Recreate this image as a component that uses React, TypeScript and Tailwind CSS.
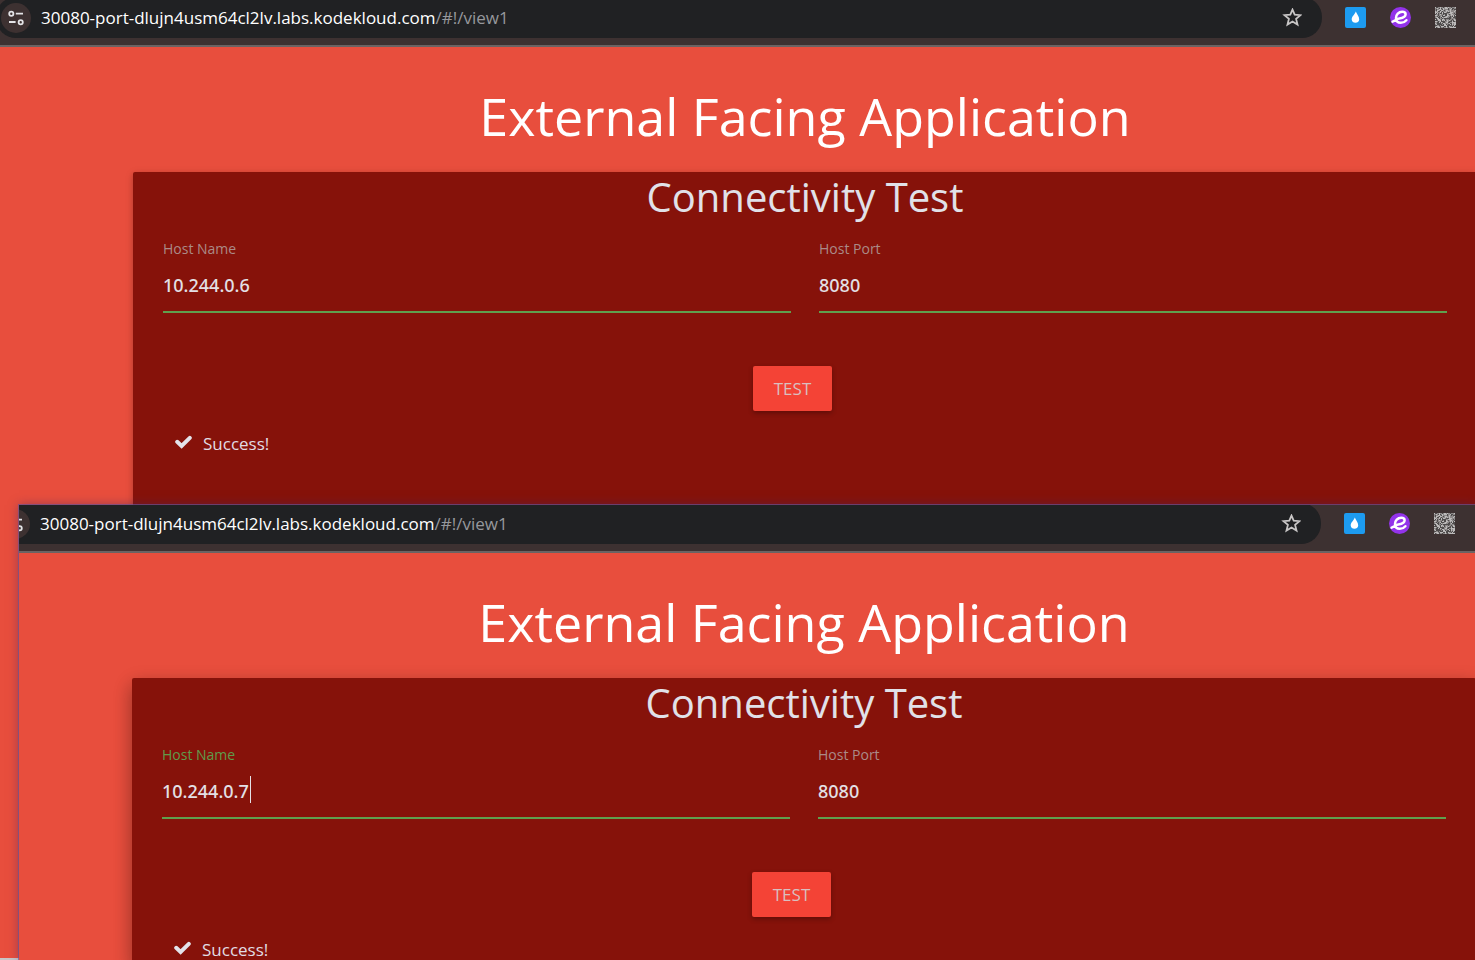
import { useId, useState } from "react";

const qrCells = Array.from({ length: 441 }, (_, i) => {
  let n = Math.imul(i + 17, 374761393) ^ 668265263;
  n = Math.imul(n ^ (n >>> 13), 1274126177);
  n = Math.imul(n ^ (n >>> 15), 2246822519);
  return ((n ^ (n >>> 16)) >>> 0) / 4294967296;
});

function TuneIcon() {
  return (
    <svg className="size-4" viewBox="0 0 16 16" fill="none" stroke="#e3e3e6" strokeWidth="1.8" aria-hidden="true">
      <circle cx="3.3" cy="3.7" r="2.1" />
      <path d="M7.8 3.7H15M1 12H7.6" />
      <circle cx="12.7" cy="12.2" r="2.1" />
    </svg>
  );
}

function StarIcon() {
  return (
    <svg className="size-5" viewBox="0 0 20 20" fill="none" stroke="#c8c6c6" strokeWidth="1.8" aria-hidden="true">
      <path d="M10.5 1.6 12.7 6.7 18.5 7.2 14.1 10.9 15.5 16.6 10.5 13.5 5.5 16.6 6.9 10.9 2.5 7.2 8.3 6.7Z" />
    </svg>
  );
}

function DropIcon() {
  return (
    <svg className="size-[21px]" viewBox="0 0 21 21" aria-hidden="true">
      <rect width="21" height="21" rx="2" fill="#1d9bf0" />
      <path d="M10.8 4.6C12 7.6 14.2 9.3 14.2 12.5A3.8 3.8 0 0 1 6.7 12.5C6.7 9.3 9.9 7.6 10.8 4.6Z" fill="#fff" />
    </svg>
  );
}

function ScriptEIcon() {
  return (
    <svg className="size-[21px]" viewBox="0 0 21 21" fill="none" aria-hidden="true">
      <circle cx="10.5" cy="10.5" r="10.5" fill="#9333ea" />
      <path
        d="M2.6 14.6C5.5 13.6 7 12 9.4 11.4 13 10.8 15.6 9.6 15.6 7.2 15.6 5.6 14 4.8 12.2 4.8 8.6 4.8 6 7.8 6 11 6 14.2 8.2 15.8 10.8 15.8 13.2 15.8 15 14.8 16.4 13.2"
        stroke="#fff"
        strokeWidth="2.5"
        strokeLinecap="round"
        strokeLinejoin="round"
      />
    </svg>
  );
}

function NoiseIcon() {
  return (
    <svg className="size-[21px]" viewBox="0 0 21 21" shapeRendering="crispEdges" aria-hidden="true">
      <rect width="21" height="21" fill="#8c8888" />
      {qrCells.map((v, i) => (
        <rect
          key={i}
          x={i % 21}
          y={Math.floor(i / 21)}
          width="1"
          height="1"
          fill={v < 0.35 ? "#4f4c4c" : v < 0.7 ? "#8c8888" : "#bcbaba"}
        />
      ))}
    </svg>
  );
}

function CheckIcon() {
  return (
    <svg className="h-[14px] w-[18px]" viewBox="0 0 18 14" fill="none" aria-hidden="true">
      <path d="M2.2 6.8 6.6 10.9 14.8 2.8" stroke="#e3e3ea" strokeWidth="4" strokeLinecap="round" />
    </svg>
  );
}

function Field({ label, initial, active = false }: { label: string; initial: string; active?: boolean }) {
  const id = useId();
  const [value, setValue] = useState(initial);
  return (
    <div className="relative flex flex-1 flex-col">
      <label htmlFor={id} className={`text-[14px] leading-5 ${active ? "text-[#5f9c4a]" : "text-[#ab8a87]"}`}>
        {label}
      </label>
      <input
        id={id}
        value={value}
        onChange={(e) => setValue(e.target.value)}
        className="h-[54px] w-full border-b-2 border-[#5fa04e] bg-transparent font-['Noto_Sans',sans-serif] text-[18px] font-medium text-[#e3e0e6] outline-none"
      />
      {active && <span className="absolute top-[31px] left-[88px] h-[27px] w-px bg-[#e3e0e6]" />}
    </div>
  );
}

function Toolbar({ front = false }: { front?: boolean }) {
  return (
    <header
      className={`flex shrink-0 items-start overflow-hidden border-b-2 border-[#6b6363] bg-[#3d3131] ${front ? "h-12" : "h-[47px]"}`}
    >
      <div
        className={`flex h-[41px] min-w-0 flex-1 items-center rounded-[20px] bg-[#202123] pr-5 ${
          front ? "-mt-[2px] -ml-6 pl-[5px]" : "-mt-[3px] -ml-1 pl-[5px]"
        }`}
      >
        <button aria-label="View site information" className="grid size-[30px] shrink-0 place-items-center rounded-full bg-[#3d3131]">
          <TuneIcon />
        </button>
        <a href="#!/view1" className="ml-[10px] flex-1 truncate text-[17px] leading-6 text-white">
          30080-port-dlujn4usm64cl2lv.labs.kodekloud.com<span className="text-[#96989c]">/#!/view1</span>
        </a>
        <button aria-label="Bookmark this page">
          <StarIcon />
        </button>
      </div>
      <div className={`flex gap-6 pl-[23px] ${front ? "pt-2 pr-5" : "pt-[7px] pr-[19px]"}`}>
        <button aria-label="Drop extension"><DropIcon /></button>
        <button aria-label="E extension"><ScriptEIcon /></button>
        <button aria-label="Code extension"><NoiseIcon /></button>
      </div>
    </header>
  );
}

function BrowserWindow({ host, front = false }: { host: string; front?: boolean }) {
  return (
    <section className="flex h-full flex-col overflow-hidden bg-[#e84e3d]">
      <Toolbar front={front} />
      <main className={`flex flex-1 flex-col pt-8 ${front ? "-mr-px pl-[113px]" : "-mr-[2px] pl-[133px]"}`}>
        <h1 className="text-center text-[52px] leading-[74px] text-white">External Facing Application</h1>
        <div
          className={`mt-[19px] flex-1 rounded-[2px] bg-[#86120a] px-[30px] ${
            front
              ? "shadow-[0_8px_17px_rgba(0,0,0,0.2),0_6px_20px_rgba(0,0,0,0.19)]"
              : "shadow-[0_2px_5px_rgba(0,0,0,0.16),0_2px_10px_rgba(0,0,0,0.12)]"
          }`}
        >
          <h2 className="text-center text-[40px] leading-[50px] text-[#e1e1e8]">Connectivity Test</h2>
          <form onSubmit={(e) => e.preventDefault()}>
            <div className="mt-[17px] flex gap-7">
              <Field label="Host Name" initial={host} active={front} />
              <Field label="Host Port" initial="8080" />
            </div>
            <div className="mt-[53px] flex justify-center pr-[25px]">
              <button
                type="submit"
                className="h-[45px] w-[79px] rounded-[2px] bg-[#f44336] text-[17px] text-[#d9bfbf] shadow-[0_2px_5px_rgba(0,0,0,0.3)]"
              >
                TEST
              </button>
            </div>
          </form>
          <p className="mt-5 flex items-center gap-[10px] pl-3 text-[17px] leading-[26px] text-[#e1dce3]">
            <span className="pb-1"><CheckIcon /></span>
            Success!
          </p>
        </div>
      </main>
    </section>
  );
}

export default function App() {
  return (
    <div className="relative h-screen overflow-hidden bg-[#c9c5c6] pb-[2px] font-['Open_Sans','Noto_Sans',sans-serif]">
      <BrowserWindow host="10.244.0.6" />
      <div className="absolute top-[505px] right-0 bottom-0 left-[19px] shadow-[0_0_0_1px_rgba(105,85,150,0.65),0_0_10px_rgba(60,40,100,0.5)]">
        <BrowserWindow host="10.244.0.7" front />
      </div>
    </div>
  );
}
